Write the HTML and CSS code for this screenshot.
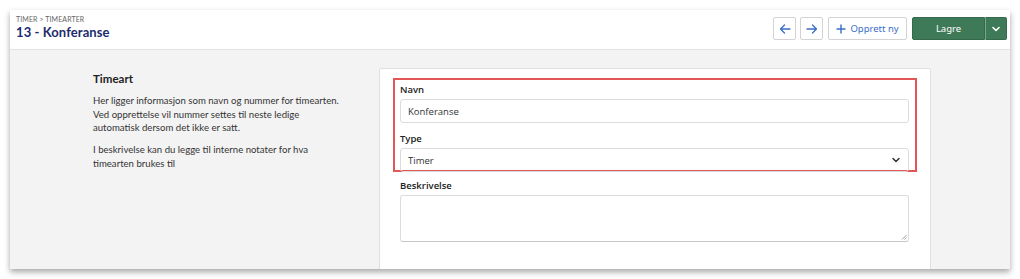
FILE: index.html
```html
<!DOCTYPE html>
<html lang="no">
  <head>
    <meta charset="UTF-8" />
    <title>13 - Konferanse</title>
    <link rel="stylesheet" href="styles.css">
  </head>
  <body>
    <div class="window">
      <div class="topbar">
        <div class="heading">
          <p class="crumbs">TIMER &gt; TIMEARTER</p>
          <h1>13 - Konferanse</h1>
        </div>
        <div class="actions">
          <button class="btn icon">
            <svg width="12" height="12" viewBox="0 0 12 12"><path d="M11 6H1.5M5.5 2 1.5 6l4 4" fill="none" stroke="#3a6ec6" stroke-width="1.3" stroke-linecap="round" stroke-linejoin="round"/></svg>
          </button>
          <button class="btn icon">
            <svg width="12" height="12" viewBox="0 0 12 12"><path d="M1 6h9.5M6.5 2l4 4-4 4" fill="none" stroke="#3a6ec6" stroke-width="1.3" stroke-linecap="round" stroke-linejoin="round"/></svg>
          </button>
          <button class="btn new">
            <svg width="10" height="10" viewBox="0 0 10 10"><path d="M5 1v8M1 5h8" fill="none" stroke="#3a6ec6" stroke-width="1.4" stroke-linecap="round"/></svg>
            Opprett ny
          </button>
          <div class="save">
            <button class="save-main">Lagre</button>
            <button class="save-more">
              <svg width="10" height="10" viewBox="0 0 10 10"><path d="M2 3.5 5 6.5 8 3.5" fill="none" stroke="#fff" stroke-width="1.6" stroke-linecap="round" stroke-linejoin="round"/></svg>
            </button>
          </div>
        </div>
      </div>
      <div class="content">
        <div class="intro">
          <h2>Timeart</h2>
          <p>Her ligger informasjon som navn og nummer for timearten. Ved opprettelse vil nummer settes til neste ledige automatisk dersom det ikke er satt.</p>
          <p>I beskrivelse kan du legge til interne notater for hva timearten brukes til</p>
        </div>
        <div class="card">
          <div class="marked">
            <label class="label">Navn</label>
            <div class="field">Konferanse</div>
            <label class="label">Type</label>
            <div class="field select">
              Timer
              <svg width="10" height="10" viewBox="0 0 10 10"><path d="M2 3.5 5 6.5 8 3.5" fill="none" stroke="#333" stroke-width="1.5" stroke-linecap="round" stroke-linejoin="round"/></svg>
            </div>
          </div>
          <div class="plain">
            <label class="label">Beskrivelse</label>
            <div class="field area">
              <svg class="grip" width="6" height="6" viewBox="0 0 6 6"><path d="M5.5 1 1 5.5M5.5 3.5 3.5 5.5" stroke="#888" stroke-width="0.8"/></svg>
            </div>
          </div>
        </div>
      </div>
    </div>
  </body>
</html>
```

FILE: styles.css
```css
* {
  margin: 0;
  padding: 0;
  box-sizing: border-box;
}
body {
  background: #fff;
  font-family: Lato, "Noto Sans", sans-serif;
}
.window {
  margin: 10px;
  width: 1000px;
  height: 259px;
  background: #f3f3f3;
  box-shadow: 0 3px 6px rgba(0, 0, 0, 0.35);
  overflow: hidden;
}
.topbar {
  height: 40px;
  background: #fff;
  border-bottom: 1px solid #e2e2e2;
  display: flex;
  justify-content: space-between;
  align-items: flex-start;
  padding: 5px 3px 0 6px;
}
.crumbs {
  font-size: 7px;
  color: #666;
  letter-spacing: 0.1px;
}
h1 {
  font-size: 13px;
  font-weight: 700;
  color: #1d2b6d;
  margin-top: 1px;
  letter-spacing: 0.1px;
}
.actions {
  display: flex;
  gap: 4px;
  align-items: center;
  padding-top: 2px;
}
.btn {
  height: 23px;
  border: 1px solid #d3d3d3;
  border-radius: 2px;
  background: #fff;
  display: flex;
  align-items: center;
  justify-content: center;
  font-family: "Noto Sans", sans-serif;
}
.btn.icon {
  width: 23px;
}
.btn.new {
  width: 79px;
  gap: 4px;
  color: #3a6ec6;
  font-size: 9.5px;
  margin-left: 1px;
}
.save {
  display: flex;
  height: 23px;
  margin-left: 1px;
}
.save button {
  background: #3f7a58;
  border: 1px solid #356b4c;
  color: #fff;
  font-family: "Noto Sans", sans-serif;
  font-size: 9.5px;
}
.save-main {
  width: 73px;
  border-radius: 2px 0 0 2px;
}
.save-more {
  width: 22px;
  border-left: 1px solid #7ea38d !important;
  border-radius: 0 2px 2px 0;
  display: flex;
  align-items: center;
  justify-content: center;
}
.content {
  display: flex;
  padding-top: 18px;
}
.intro {
  width: 286px;
  margin-left: 83px;
  padding-top: 4px;
  color: #333;
}
.intro h2 {
  font-size: 11.5px;
  font-weight: 700;
  color: #222;
  margin-bottom: 9px;
}
.intro p {
  font-size: 9.6px;
  line-height: 13.7px;
  width: 250px;
  margin-bottom: 8px;
}
.card {
  width: 552px;
  height: 210px;
  background: #fff;
  border: 1px solid #e0e0e0;
  border-radius: 2px;
  padding: 9px 13px 0 13px;
  font-family: "Open Sans", sans-serif;
}
.marked {
  border: 2px solid #e45656;
  padding: 3px 6px 0 5px;
  height: 94px;
}
.plain {
  padding: 7px 8px 0 7px;
}
.label {
  display: block;
  font-size: 9.5px;
  font-weight: 600;
  color: #222;
  height: 15px;
  margin-bottom: 1px;
}
.field {
  height: 24px;
  border: 1px solid #dcdcdc;
  border-radius: 3px;
  padding: 0 7px;
  font-size: 9.5px;
  color: #333;
  display: flex;
  align-items: center;
  margin-bottom: 9px;
}
.select {
  justify-content: space-between;
  margin-bottom: 0;
}
.area {
  height: 47px;
  border-bottom-color: #c8c8c8;
  align-items: flex-end;
  justify-content: flex-end;
  padding: 0 1px 1px 0;
}
```
